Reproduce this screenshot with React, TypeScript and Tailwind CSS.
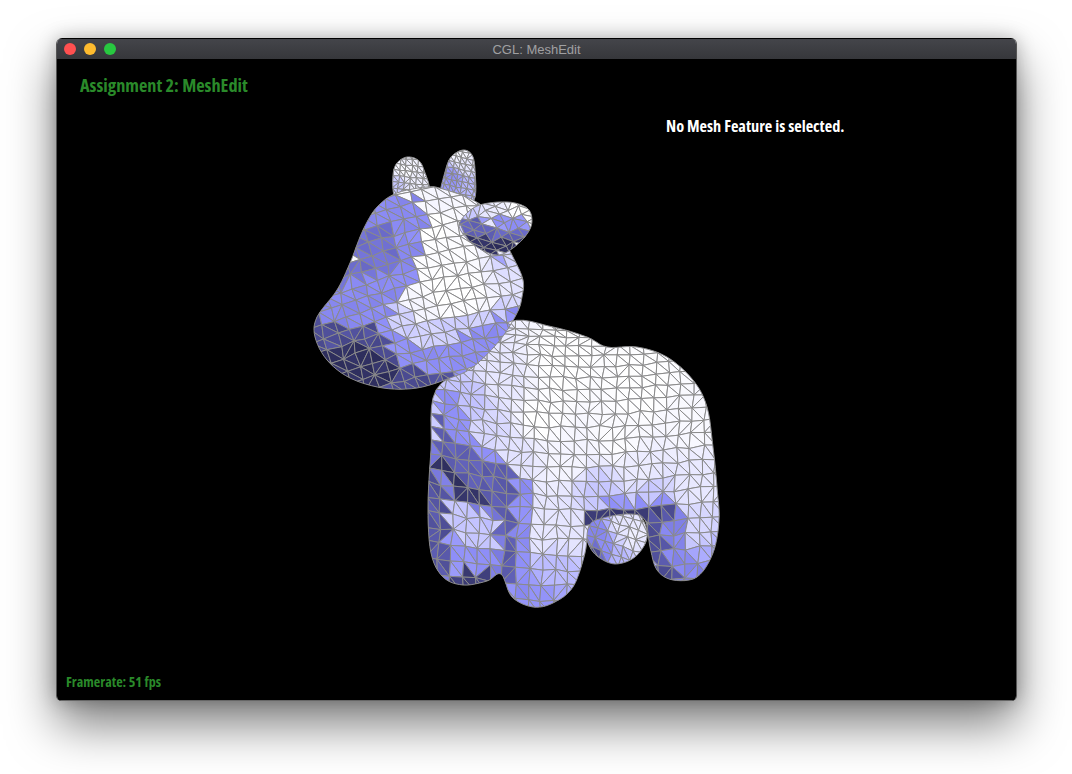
import React from 'react';

type Pt = [number, number];
type Shade = [number, number, number];
type Region = { pts: Pt[]; v: number };

interface Part {
  outline: Pt[];
  cell: number;
  angle: number;
  seed: number;
  shades: Shade[];
  regions?: Region[];
  warp?: (x: number, y: number) => Pt;
}

// closed catmull-rom through the outline points
const smooth = (pts: Pt[], steps = 6): Pt[] => {
  const out: Pt[] = [];
  const n = pts.length;
  for (let i = 0; i < n; i++) {
    const [p0, p1, p2, p3] = [pts[(i + n - 1) % n], pts[i], pts[(i + 1) % n], pts[(i + 2) % n]];
    for (let s = 0; s < steps; s++) {
      const t = s / steps;
      const f = (a: number, b: number, c: number, d: number) =>
        0.5 * (2 * b + (c - a) * t + (2 * a - 5 * b + 4 * c - d) * t * t + (3 * b - a - 3 * c + d) * t * t * t);
      out.push([f(p0[0], p1[0], p2[0], p3[0]), f(p0[1], p1[1], p2[1], p3[1])]);
    }
  }
  return out;
};

const toPath = (pts: Pt[]) => 'M' + pts.map(p => `${p[0].toFixed(1)} ${p[1].toFixed(1)}`).join('L') + 'Z';

const noise = (a: number, b: number, seed: number) => {
  const v = Math.sin(a * 127.1 + b * 311.7 + seed * 74.7) * 43758.5453;
  return v - Math.floor(v);
};

const ramp: [number, number, number, number][] = [
  [0, 34, 34, 72],
  [0.2, 72, 72, 140],
  [0.35, 112, 112, 210],
  [0.5, 142, 142, 248],
  [0.65, 180, 180, 255],
  [0.82, 226, 226, 255],
  [1, 255, 255, 255],
];

const color = (v: number) => {
  const c = Math.max(0, Math.min(1, v));
  for (let i = 1; i < ramp.length; i++) {
    if (c <= ramp[i][0]) {
      const a = ramp[i - 1];
      const b = ramp[i];
      const t = (c - a[0]) / (b[0] - a[0]);
      return `rgb(${Math.round(a[1] + (b[1] - a[1]) * t)},${Math.round(a[2] + (b[2] - a[2]) * t)},${Math.round(a[3] + (b[3] - a[3]) * t)})`;
    }
  }
  return '#fff';
};

const inside = (x: number, y: number, pts: Pt[]) => {
  let hit = false;
  for (let i = 0, j = pts.length - 1; i < pts.length; j = i++) {
    const [xi, yi] = pts[i];
    const [xj, yj] = pts[j];
    if (yi > y !== yj > y && x < ((xj - xi) * (y - yi)) / (yj - yi) + xi) hit = !hit;
  }
  return hit;
};

const shadeAt = (x: number, y: number, part: Part) => {
  if (part.regions) {
    for (let i = part.regions.length - 1; i >= 0; i--) {
      if (inside(x, y, part.regions[i].pts)) {
        return part.regions[i].v + (noise(x, y, part.seed) - 0.5) * 0.07;
      }
    }
  }
  let sum = 0;
  let weight = 0;
  for (const [sx, sy, v] of part.shades) {
    const d = (x - sx) ** 2 + (y - sy) ** 2 + 1;
    const w = 1 / (d * d);
    sum += w * v;
    weight += w;
  }
  return sum / weight;
};

const triangles = (part: Part) => {
  const xs = part.outline.map(p => p[0]);
  const ys = part.outline.map(p => p[1]);
  const cx = (Math.min(...xs) + Math.max(...xs)) / 2;
  const cy = (Math.min(...ys) + Math.max(...ys)) / 2;
  const r = Math.max(Math.max(...xs) - Math.min(...xs), Math.max(...ys) - Math.min(...ys)) * 0.85;
  const n = Math.ceil(r / part.cell);
  const cos = Math.cos(part.angle);
  const sin = Math.sin(part.angle);
  const vert = (i: number, j: number): Pt => {
    const u = i * part.cell + (noise(i, j, part.seed) - 0.5) * part.cell * 0.22;
    const v = j * part.cell + (noise(j, i, part.seed + 1) - 0.5) * part.cell * 0.22;
    const x = cx + u * cos - v * sin;
    const y = cy + u * sin + v * cos;
    return part.warp ? part.warp(x, y) : [x, y];
  };
  const tris: { d: string; fill: string }[] = [];
  for (let i = -n; i < n; i++) {
    for (let j = -n; j < n; j++) {
      const a = vert(i, j);
      const b = vert(i + 1, j);
      const c = vert(i + 1, j + 1);
      const d = vert(i, j + 1);
      const flip = noise(i, j, part.seed + 2) > 0.8;
      const faces = flip ? [[a, b, d], [b, c, d]] : [[a, b, c], [a, c, d]];
      for (const f of faces) {
        const mx = (f[0][0] + f[1][0] + f[2][0]) / 3;
        const my = (f[0][1] + f[1][1] + f[2][1]) / 3;
        if (mx < cx - r || mx > cx + r || my < cy - r || my > cy + r) continue;
        tris.push({ d: toPath(f), fill: color(shadeAt(mx, my, part)) });
      }
    }
  }
  return tris;
};

const parts: Part[] = [
  // left horn
  {
    outline: [[395, 197], [393, 175], [397, 163], [407, 157], [418, 160], [424, 170], [429, 192], [410, 198]],
    cell: 6,
    angle: 0.1,
    seed: 3,
    shades: [[405, 170, 0.97], [415, 182, 0.9], [398, 185, 0.72], [408, 160, 0.92]],
  },
  // right horn
  {
    outline: [[441, 194], [445, 172], [451, 157], [463, 150], [472, 155], [475, 170], [474, 200], [455, 200]],
    cell: 6,
    angle: 0.2,
    seed: 5,
    shades: [[452, 178, 0.5], [465, 165, 0.85], [470, 188, 0.66], [462, 154, 0.95], [446, 186, 0.55]],
  },
  // udder, sits behind the belly
  {
    outline: [[587, 530], [598, 512], [625, 505], [642, 518], [647, 538], [635, 557], [615, 564], [597, 556], [588, 543]],
    cell: 10,
    angle: 0.3,
    seed: 11,
    shades: [[622, 528, 0.84], [634, 537, 0.9], [604, 545, 0.5], [620, 556, 0.66], [640, 545, 0.82], [595, 534, 0.45], [594, 552, 0.2]],
  },
  // body and legs
  {
    outline: [
      [510, 322], [553, 327], [587, 337], [607, 347], [637, 347], [667, 357], [693, 380], [707, 407],
      [713, 447], [717, 487], [719, 520], [713, 553], [697, 577], [673, 580], [657, 570], [650, 547],
      [645, 520], [630, 514], [603, 518], [589, 526], [585, 553], [573, 587], [553, 603], [533, 607],
      [512, 597], [501, 574], [487, 581], [463, 585], [443, 577], [431, 553], [428, 507], [431, 450],
      [436, 390], [480, 360],
    ],
    cell: 13,
    angle: 0.02,
    seed: 7,
    warp: (x, y) => {
      const t = Math.max(0, (y - 320) / 290);
      const ny = y < 320 ? y : 320 + 290 * Math.pow(t, 1.22);
      return [x + (y - 460) * -0.03, ny + 10 * Math.sin((x - 430) / 85)];
    },
    shades: [
      [560, 365, 1], [640, 390, 1], [540, 420, 1], [620, 440, 0.98], [690, 425, 0.96], [700, 480, 0.86],
      [640, 470, 0.88], [565, 460, 0.94], [650, 495, 0.72], [600, 492, 0.72], [540, 530, 0.85], [570, 530, 0.84],
      [555, 570, 0.68], [540, 595, 0.52], [700, 530, 0.78], [708, 555, 0.62], [695, 572, 0.42],
      [500, 380, 0.85], [470, 400, 0.7], [490, 430, 0.78], [515, 455, 0.82],
    ],
    regions: [
      { pts: [[425, 440], [500, 505], [502, 590], [425, 590]], v: 0.4 },
      { pts: [[440, 387], [460, 397], [470, 433], [493, 453], [520, 473], [530, 477], [532, 553], [530, 600], [507, 597], [497, 510], [440, 453]], v: 0.5 },
      { pts: [[437, 393], [443, 420], [453, 437], [487, 457], [517, 473], [510, 510], [517, 560], [522, 585], [505, 585], [498, 510], [437, 453]], v: 0.28 },
      { pts: [[437, 453], [460, 477], [497, 507], [500, 513], [463, 497], [450, 483], [435, 467]], v: 0.1 },
      { pts: [[425, 463], [447, 497], [447, 573], [433, 570], [424, 537]], v: 0.25 },
      { pts: [[447, 497], [497, 517], [498, 553], [477, 553], [447, 533]], v: 0.72 },
      { pts: [[447, 533], [477, 553], [498, 553], [500, 570], [480, 578], [447, 573]], v: 0.52 },
      { pts: [[462, 572], [498, 568], [482, 590], [452, 590]], v: 0.14 },
      { pts: [[593, 498], [677, 500], [667, 508], [607, 508]], v: 0.52 },
      { pts: [[585, 507], [667, 508], [677, 512], [655, 522], [630, 519], [600, 526], [585, 532]], v: 0.12 },
      { pts: [[665, 520], [677, 509], [692, 513], [682, 530], [684, 560], [702, 574], [680, 582], [665, 550]], v: 0.46 },
      { pts: [[645, 517], [667, 510], [677, 510], [665, 520], [665, 550], [680, 582], [655, 578], [648, 545]], v: 0.24 },
    ],
  },
  // head
  {
    outline: [
      [397, 193], [427, 187], [443, 189], [473, 200], [490, 215], [513, 257], [523, 280], [522, 297], [517, 313],
      [500, 340], [473, 367], [450, 378], [417, 388], [383, 388], [350, 378], [327, 360], [315, 337], [317, 317],
      [337, 290], [350, 263], [363, 230], [377, 207],
    ],
    cell: 13,
    angle: -0.25,
    seed: 13,
    warp: (x, y) => [x, y - 5 * Math.sin((x - 320) / 50)],
    shades: [
      [445, 290, 1], [472, 290, 1], [492, 300, 0.95], [434, 225, 1], [462, 260, 0.98], [420, 315, 0.94],
      [502, 292, 0.88], [515, 282, 0.82], [506, 262, 0.78], [470, 215, 0.96], [440, 200, 0.94],
    ],
    regions: [
      { pts: [[300, 270], [385, 270], [390, 335], [300, 340]], v: 0.46 },
      { pts: [[305, 335], [385, 322], [415, 345], [520, 305], [510, 345], [440, 395], [340, 395]], v: 0.5 },
      { pts: [[370, 195], [417, 198], [427, 220], [417, 263], [413, 287], [397, 300], [385, 322], [312, 322], [337, 287], [350, 263], [363, 230]], v: 0.48 },
      { pts: [[362, 228], [393, 227], [400, 267], [360, 277], [335, 290], [350, 260]], v: 0.35 },
      { pts: [[385, 322], [397, 300], [425, 325], [470, 316], [524, 288], [520, 308], [433, 350], [410, 343]], v: 0.76 },
      { pts: [[393, 327], [410, 347], [433, 353], [473, 330], [518, 306], [505, 332], [477, 355], [453, 372], [433, 377], [400, 367]], v: 0.5 },
      { pts: [[310, 320], [380, 327], [390, 347], [400, 367], [433, 373], [465, 368], [440, 395], [340, 395], [312, 360]], v: 0.22 },
      { pts: [[318, 347], [360, 343], [380, 353], [397, 373], [377, 395], [335, 385]], v: 0.08 },
      { pts: [[455, 232], [470, 245], [512, 262], [490, 260]], v: 0.55 },
    ],
  },
  // ear
  {
    outline: [[460, 222], [477, 206], [507, 202], [527, 208], [532, 221], [527, 234], [513, 248], [497, 255], [477, 247], [463, 234]],
    cell: 10,
    angle: -0.5,
    seed: 17,
    shades: [[470, 215, 0.72], [498, 208, 0.9], [520, 207, 1], [490, 215, 0.85]],
    regions: [
      { pts: [[480, 218], [520, 215], [534, 222], [528, 234], [500, 228]], v: 0.52 },
      { pts: [[457, 220], [478, 220], [500, 228], [530, 232], [513, 250], [497, 258], [477, 250], [462, 235]], v: 0.3 },
      { pts: [[465, 234], [490, 238], [525, 240], [513, 250], [497, 258], [477, 250]], v: 0.08 },
    ],
  },
];

const Cow: React.FC = () => (
  <svg className="absolute -left-px top-0" width="961" height="642" viewBox="56 59 961 642" aria-hidden="true">
    <defs>
      {parts.map((_, i) => (
        <clipPath key={i} id={`part-${i}`}>
          <path d={toPath(smooth(parts[i].outline))} />
        </clipPath>
      ))}
    </defs>
    {parts.map((part, i) => {
      const shape = toPath(smooth(part.outline));
      return (
        <g key={i}>
          <g clipPath={`url(#part-${i})`}>
            <path d={shape} fill="#8d8df5" />
            {triangles(part).map((t, k) => (
              <path key={k} d={t.d} fill={t.fill} stroke="#8a8a8a" strokeWidth="1" strokeLinejoin="round" />
            ))}
          </g>
          <path d={shape} fill="none" stroke="#8a8a8a" strokeWidth="1" />
        </g>
      );
    })}
  </svg>
);

const App: React.FC = () => {
  return (
    <div className="w-[1072px] h-[774px] bg-white pt-[38px] pl-[56px] overflow-hidden">
      <div className="w-[961px] h-[663px] flex flex-col rounded-t-[6px] rounded-b-[5px] overflow-hidden border-x border-[#555] shadow-[0_24px_48px_rgba(0,0,0,0.5),0_0_18px_rgba(0,0,0,0.25)]">
        {/* Title bar */}
        <div className="relative h-[21px] shrink-0 flex items-center bg-gradient-to-b from-[#44454a] to-[#36373b] border-t border-black">
          <div className="flex items-center gap-2 pl-[7px]">
            <span className="w-3 h-3 rounded-full bg-[#ff5050]" />
            <span className="w-3 h-3 rounded-full bg-[#febb2e]" />
            <span className="w-3 h-3 rounded-full bg-[#28c840]" />
          </div>
          <div className="absolute inset-0 pt-px flex items-center justify-center text-[13px] text-[#a0a0a2] font-['Liberation_Sans',sans-serif]">
            CGL: MeshEdit
          </div>
        </div>

        {/* GL canvas */}
        <div className="relative flex-1 flex flex-col bg-black border-b border-[#666] font-['Open_Sans',sans-serif] font-bold [font-stretch:75%]">
          <Cow />
          <div className="relative pl-[23px] pt-[13px] text-[18.3px] leading-[26px] text-[#2a8a2a]">Assignment 2: MeshEdit</div>
          <div className="relative pl-[609px] pt-[16px] text-[16.3px] leading-[24px] text-white">No Mesh Feature is selected.</div>
          <div className="relative mt-auto pl-[9px] pb-[9px] text-[14.1px] leading-[19px] text-[#2a8a2a]">Framerate: 51 fps</div>
        </div>
      </div>
    </div>
  );
};

export default App;
